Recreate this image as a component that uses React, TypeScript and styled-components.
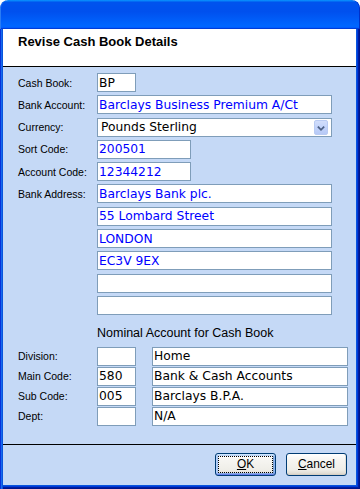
import React from "react";
import styled, { createGlobalStyle } from "styled-components";

const GlobalStyle = createGlobalStyle`
  *, *::before, *::after { box-sizing: border-box; }
  html, body { margin: 0; padding: 0; background: #fff; }
  #root { width: 360px; height: 489px; }
`;

const UI_FONT = `"Liberation Sans", Arial, sans-serif`;
const FIELD_FONT = `"DejaVu Sans", Tahoma, sans-serif`;

type Tone = "blue" | "black";

const addressLines = [
  "Barclays Bank plc.",
  "55 Lombard Street",
  "LONDON",
  "EC3V 9EX",
  "",
  "",
];

const nominalRows = [
  { label: "Division:", code: "", name: "Home" },
  { label: "Main Code:", code: "580", name: "Bank & Cash Accounts" },
  { label: "Sub Code:", code: "005", name: "Barclays B.P.A." },
  { label: "Dept:", code: "", name: "N/A" },
];

function App() {
  return (
    <>
      <GlobalStyle />
      <S.Window>
        <S.TitleBar />
        <S.Frame>
          <S.Panel>
            <S.Header>
              <S.Title>Revise Cash Book Details</S.Title>
            </S.Header>

            <S.Content>
              <S.Form>
                <S.Label>Cash Book:</S.Label>
                <S.Field $w={39} $tone="black" value="BP" readOnly />

                <S.Label>Bank Account:</S.Label>
                <S.Field
                  $w={235}
                  $tone="blue"
                  value="Barclays Business Premium A/Ct"
                  readOnly
                />

                <S.Label>Currency:</S.Label>
                <S.Select>
                  <S.SelectText>Pounds Sterling</S.SelectText>
                  <S.DropButton>
                    <svg width="14" height="15" viewBox="0 0 14 15">
                      <path
                        d="M4 6 L7 9 L10 6"
                        fill="none"
                        stroke="#4d6185"
                        strokeWidth="2"
                        strokeLinecap="square"
                      />
                    </svg>
                  </S.DropButton>
                </S.Select>

                <S.Label>Sort Code:</S.Label>
                <S.Field $w={94} $tone="blue" value="200501" readOnly />

                <S.Label>Account Code:</S.Label>
                <S.Field $w={94} $tone="blue" value="12344212" readOnly />

                {addressLines.map((line, i) => (
                  <React.Fragment key={i}>
                    <S.Label>{i === 0 ? "Bank Address:" : ""}</S.Label>
                    <S.Field $w={235} $tone="blue" value={line} readOnly />
                  </React.Fragment>
                ))}
              </S.Form>

              <S.Nominal>
                <S.Heading>Nominal Account for Cash Book</S.Heading>
                {nominalRows.map((row) => (
                  <React.Fragment key={row.label}>
                    <S.Label>{row.label}</S.Label>
                    <S.Field $w={39} $tone="black" value={row.code} readOnly />
                    <span />
                    <S.Field $w={196} $tone="black" value={row.name} readOnly />
                  </React.Fragment>
                ))}
              </S.Nominal>
            </S.Content>

            <S.Footer>
              <S.Button $isDefault>
                <S.Focus>
                  <u>O</u>K
                </S.Focus>
              </S.Button>
              <S.Button>
                <S.Focus $hidden>
                  <u>C</u>ancel
                </S.Focus>
              </S.Button>
            </S.Footer>
          </S.Panel>
        </S.Frame>
      </S.Window>
    </>
  );
}

const S = {
  Window: styled.div`
    width: 360px;
    height: 489px;
    display: flex;
    flex-direction: column;
    border-radius: 8px 8px 0 0;
    overflow: hidden;
    font-family: ${UI_FONT};
  `,
  TitleBar: styled.div`
    flex: none;
    height: 29px;
    border-radius: 8px 8px 0 0;
    background: linear-gradient(
      180deg,
      #0997ff 0,
      #0053ee 8%,
      #0050ee 40%,
      #0066ff 88%,
      #0066ff 93%,
      #005bff 95%,
      #003dd7 96%,
      #003dd7 100%
    );
    box-shadow: inset 1px 0 0 #2a7cf4, inset -1px 0 0 #0030c8;
  `,
  Frame: styled.div`
    flex: 1;
    min-height: 0;
    display: flex;
    padding: 0 4px 4px 3px;
    background: #0831d9;
    box-shadow: inset 1px 0 0 #0831d9, inset 2px 0 0 #166aee,
      inset 3px 0 0 #0855dd, inset -1px -1px 0 #00138c,
      inset -2px -2px 0 #001ea0, inset -3px -3px 0 #003bda,
      inset -4px -4px 0 #0855dd;
  `,
  Panel: styled.div`
    flex: 1;
    display: flex;
    flex-direction: column;
    background: #c5d9f6;
  `,
  Header: styled.div`
    flex: none;
    height: 38px;
    padding: 6px 0 0 15px;
    background: #fff;
    border-bottom: 1px solid #000;
  `,
  Title: styled.div`
    font-weight: bold;
    font-size: 13px;
    line-height: 14px;
    color: #000;
  `,
  Content: styled.div`
    flex: 1;
    padding: 6px 0 0 15px;
  `,
  Form: styled.div`
    display: grid;
    grid-template-columns: 79px 1fr;
    row-gap: 3.3px;
    align-items: center;
  `,
  Label: styled.span`
    font-size: 10.5px;
    line-height: 12px;
    color: #000;
    white-space: nowrap;
  `,
  Field: styled.input<{ $w: number; $tone: Tone }>`
    display: block;
    width: ${(p) => p.$w}px;
    height: 19px;
    margin: 0;
    padding: 0 1px;
    border: 1px solid #7f9db9;
    border-radius: 0;
    background: #fff;
    outline: none;
    font-family: ${FIELD_FONT};
    font-size: 12.3px;
    color: ${(p) => (p.$tone === "blue" ? "#0000ff" : "#000")};
  `,
  Select: styled.div`
    width: 235px;
    height: 19px;
    display: flex;
    align-items: center;
    justify-content: space-between;
    padding: 0 3px 0 3px;
    border: 1px solid #7f9db9;
    background: #fff;
  `,
  SelectText: styled.span`
    font-family: ${FIELD_FONT};
    font-size: 12.3px;
    color: #000;
  `,
  DropButton: styled.span`
    width: 14px;
    height: 15px;
    display: flex;
    border: 1px solid #b9cbf3;
    border-radius: 2px;
    background: linear-gradient(180deg, #d2defb 0%, #c2d3fb 50%, #b7c9f6 100%);
  `,
  Nominal: styled.div`
    display: grid;
    grid-template-columns: 79px 39px 16px 196px;
    row-gap: 1px;
    align-items: center;
    margin-top: 11px;
  `,
  Heading: styled.div`
    grid-column: 2 / -1;
    margin-bottom: 5px;
    font-size: 12.5px;
    line-height: 15px;
    color: #000;
    white-space: nowrap;
  `,
  Footer: styled.div`
    flex: none;
    height: 41px;
    display: flex;
    justify-content: flex-end;
    align-items: flex-start;
    gap: 10px;
    padding: 8px 9px 0 0;
    border-top: 1px solid #000;
  `,
  Button: styled.div<{ $isDefault?: boolean }>`
    width: 61px;
    height: 23px;
    padding: 2px;
    border: 1px solid #003c74;
    border-radius: 3px;
    background: linear-gradient(
      180deg,
      #ffffff 0%,
      #f6f5f1 30%,
      #efeee8 75%,
      #e3e0d8 90%,
      #d6d0c5 100%
    );
    box-shadow: ${(p) =>
      p.$isDefault
        ? "inset 0 1px 0 #cee7ff, inset 0 -1px 0 #6982ee, inset 1px 0 0 #b6d0f6, inset -1px 0 0 #8cb4f2, inset 0 2px 0 #bcd4f6, inset 2px 0 0 #a3c2f2, inset -2px 0 0 #7da2ce, inset 0 -2px 0 #89ade4"
        : "inset 0 -1px 0 #d6d0c5, inset -1px 0 0 #e3e0d8"};
    font-family: ${UI_FONT};
    font-size: 11.9px;
    color: #000;
  `,
  Focus: styled.div<{ $hidden?: boolean }>`
    height: 100%;
    display: flex;
    align-items: center;
    justify-content: center;
    border: 1px dotted ${(p) => (p.$hidden ? "transparent" : "#000")};
    line-height: 1;
    u {
      text-decoration-thickness: 1px;
      text-underline-offset: 1px;
    }
  `,
};

export default App;
